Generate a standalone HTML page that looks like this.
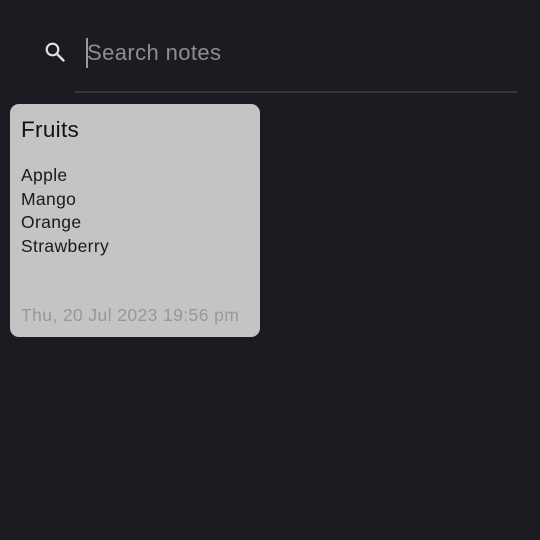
<!DOCTYPE html>
<html><head><style>
html,body{margin:0;padding:0;width:540px;height:540px;background:#1c1b22;overflow:hidden;font-family:"Liberation Sans",sans-serif}
.line{position:absolute;left:75px;top:91px;width:442px;height:2px;background:#34333a}
.search{position:absolute;left:87px;top:40px;font-size:22px;letter-spacing:0.4px;color:#8e8d93;line-height:26px}
.caret{position:absolute;left:86px;top:38px;width:2px;height:30px;background:#9a99a0}
.card{position:absolute;left:10px;top:104px;width:250px;height:233px;background:#c4c4c4;border-radius:9px}
.t{position:absolute;left:11px;top:13px;font-size:22.5px;letter-spacing:0.3px;color:#111}
.b{position:absolute;left:11px;top:60px;font-size:17.5px;letter-spacing:0.35px;line-height:23.7px;color:#1a1a1a}
.d{position:absolute;left:11px;top:201px;font-size:17.5px;letter-spacing:0.4px;color:#989898}
</style></head><body>
<svg style="position:absolute;left:43px;top:40px" width="26" height="26" viewBox="0 0 26 26"><circle cx="9.5" cy="9.5" r="5.8" fill="none" stroke="#e0e0e0" stroke-width="2.2"/><line x1="14" y1="14" x2="20.5" y2="20.5" stroke="#e0e0e0" stroke-width="2.4" stroke-linecap="round"/></svg>
<div class="caret"></div>
<div class="search">Search notes</div>
<div class="line"></div>
<div class="card">
<div class="t">Fruits</div>
<div class="b">Apple<br>Mango<br>Orange<br>Strawberry</div>
<div class="d">Thu, 20 Jul 2023 19:56 pm</div>
</div>
</body></html>
